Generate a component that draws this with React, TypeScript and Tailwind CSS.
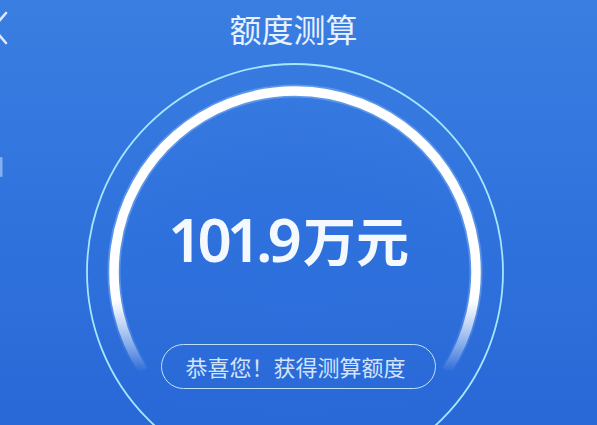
const Rings = () => {
  return (
    <svg
      className="absolute inset-0"
      width="597"
      height="425"
      viewBox="0 0 597 425"
      fill="none"
    >
      <defs>
        <linearGradient id="arcFade" gradientUnits="userSpaceOnUse" x1="0" y1="300" x2="0" y2="372">
          <stop offset="0" stopColor="#ffffff" stopOpacity="1" />
          <stop offset="1" stopColor="#ffffff" stopOpacity="0" />
        </linearGradient>
        <linearGradient id="glowFade" gradientUnits="userSpaceOnUse" x1="0" y1="300" x2="0" y2="372">
          <stop offset="0" stopColor="#bfe0ff" stopOpacity="0.3" />
          <stop offset="1" stopColor="#bfe0ff" stopOpacity="0" />
        </linearGradient>
        <radialGradient id="innerTone" cx="295" cy="272" r="180" gradientUnits="userSpaceOnUse">
          <stop offset="0" stopColor="#2d6fdd" stopOpacity="0.5" />
          <stop offset="1" stopColor="#2b6bdb" stopOpacity="0" />
        </radialGradient>
      </defs>

      {/* back chevron, mostly off screen */}
      <polyline
        points="6,13 -7,28 6,43"
        stroke="#dce9ff"
        strokeWidth="2.6"
        strokeLinecap="round"
        strokeLinejoin="round"
      />
      <rect x="0" y="157" width="2.5" height="20" rx="1" fill="#dbe8ff" opacity="0.5" />

      <circle cx="295" cy="272" r="176" fill="url(#innerTone)" />

      {/* outer thin ring */}
      <circle cx="295" cy="272" r="208" stroke="#a6e6ff" strokeWidth="1.8" />

      {/* thick arc with faded ends */}
      <path
        d="M 143.2 370.6 A 181 181 0 1 1 446.8 370.6"
        stroke="url(#glowFade)"
        strokeWidth="13"
      />
      <path
        d="M 143.2 370.6 A 181 181 0 1 1 446.8 370.6"
        stroke="url(#arcFade)"
        strokeWidth="9.5"
      />
    </svg>
  );
};

export default function App() {
  return (
    <div className="relative w-[597px] h-[425px] overflow-hidden bg-gradient-to-b from-[#3b7ee1] via-[#3073dd] to-[#2968d7]">
      <Rings />

      <div className="relative flex flex-col items-center font-['Noto_Sans','Noto_Sans_CJK_SC',sans-serif]">
        <h1 className="mt-[9px] h-[38px] pr-[10px] text-[32px] leading-[38px] font-normal text-[#e8f1ff] font-['Noto_Sans_CJK_SC',sans-serif]">
          额度测算
        </h1>

        <div className="mt-[162px] h-[60px] flex items-center pr-[20px] text-[#f4f9ff] leading-[60px]">
          <span className="text-[60px] font-semibold tracking-[-5px]">101.9</span>
          <span className="ml-[6px] text-[53px] font-bold font-['Noto_Sans_CJK_SC',sans-serif]">万元</span>
        </div>

        <div className="mt-[75px] w-[275px] h-[45px] flex items-center justify-center rounded-full border-[1.5px] border-[#bde2fd] text-[22px] text-[#d3e4fb] font-['Noto_Sans_CJK_SC',sans-serif]">
          <span className="pr-[6px]">恭喜您！获得测算额度</span>
        </div>
      </div>
    </div>
  );
}
